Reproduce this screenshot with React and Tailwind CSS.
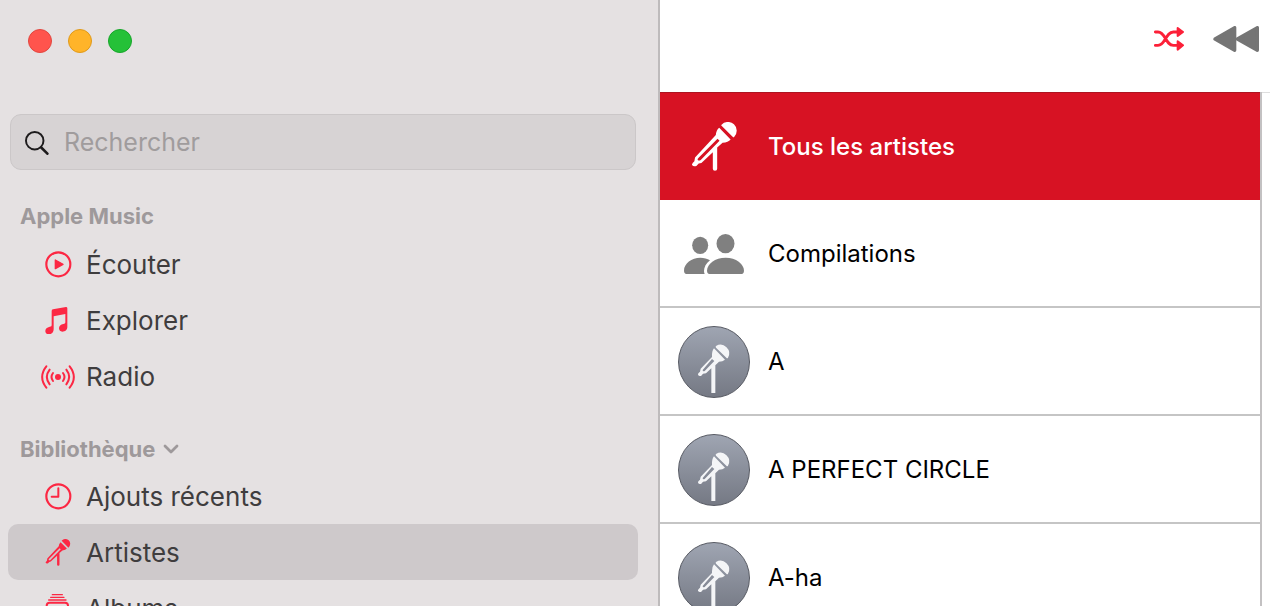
import React, { useState } from 'react';

function SearchIcon() {
  return (
    <svg viewBox="74 392 74 74" className="w-6 h-6 shrink-0" fill="none" stroke="#1d1b1c" strokeLinecap="round" aria-hidden="true">
      <circle cx="104" cy="422" r="27" strokeWidth="6" />
      <path d="M124 443 L143 462" strokeWidth="8" />
    </svg>
  );
}

function PlayIcon() {
  return (
    <svg viewBox="134 170 81 81" className="w-[27px] h-[27px]" aria-hidden="true">
      <circle cx="174" cy="210" r="36" fill="none" stroke="currentColor" strokeWidth="6.5" />
      <path d="M165 197 L188 210 L165 223 Z" fill="currentColor" stroke="currentColor" strokeWidth="4" strokeLinejoin="round" />
    </svg>
  );
}

function NoteIcon() {
  return (
    <svg viewBox="131 338 78 81" className="w-[26px] h-[27px]" fill="currentColor" aria-hidden="true">
      <path d="M151 350 Q151 346 155 345 L194 338 Q198 338 198 342 L198 398 C198 407 191 412 183 412 C177 412 173 408 173 402 C173 395 178 390 186 389 C191 388 192 387 192 383 L192 359 L157 366 L157 405 C157 414 151 420 142 420 C136 420 132 416 132 410 C132 403 137 399 145 397 C150 396 151 395 151 391 Z" />
    </svg>
  );
}

function RadioIcon() {
  return (
    <svg viewBox="122 508 102 72" className="w-[34px] h-6" fill="none" stroke="currentColor" strokeWidth="6" strokeLinecap="round" aria-hidden="true">
      <circle cx="173" cy="544" r="9" fill="currentColor" stroke="none" />
      <path d="M158 532 Q149 544 158 556 M188 532 Q197 544 188 556" />
      <path d="M148 522 Q131 544 148 566 M198 522 Q215 544 198 566" />
      <path d="M138 512 Q113 544 138 576 M208 512 Q233 544 208 576" />
    </svg>
  );
}

function ClockIcon() {
  return (
    <svg viewBox="134 176 81 81" className="w-[27px] h-[27px]" fill="none" stroke="currentColor" strokeLinecap="round" strokeLinejoin="round" aria-hidden="true">
      <circle cx="174" cy="216" r="36" strokeWidth="6.5" />
      <path d="M174 192 V217 H154" strokeWidth="6" />
    </svg>
  );
}

function MicIcon({ className }) {
  return (
    <svg viewBox="36 50 134 146" className={className} fill="currentColor" aria-hidden="true">
      <path d="M124 58 A26 26 0 0 1 162 94 Q160 97 157 94 L124 61 Q122 60 124 58 Z" />
      <path
        fillRule="evenodd"
        d="M117 67 L151 102 Q144 111 127 112 L111 126 L111 189 Q111 195 104.500 195 Q98 195 98 189 L98 140 L64 172 L56 174 L49 181 Q40 184 36 178 Q35 174 43 167 L45 156 L107 89 Q108 74 117 67 Z M112 100 L118 106 L62 163 Q56 166 53 163 Q52 160 55 157 Z"
      />
    </svg>
  );
}

function AlbumIcon() {
  return (
    <svg viewBox="134 508 78 90" className="w-[26px] h-[30px]" fill="none" stroke="currentColor" strokeLinecap="round" aria-hidden="true">
      <path d="M156 510 H186 M151 518 H191 M145 526 H197" strokeWidth="4" />
      <rect x="139" y="534" width="64" height="54" rx="9" strokeWidth="6" />
    </svg>
  );
}

function ChevronIcon() {
  return (
    <svg viewBox="0 0 16 12" className="w-4 h-3" fill="none" stroke="currentColor" strokeWidth="2.8" strokeLinecap="round" strokeLinejoin="round" aria-hidden="true">
      <path d="M2 3 L8 9 L14 3" />
    </svg>
  );
}

function ShuffleIcon() {
  return (
    <svg viewBox="102 79 93 75" className="w-[31px] h-[25px]" aria-hidden="true">
      <path
        d="M106 97 H114 C137 97 136 137 160 137 H174 M106 137 H114 C137 137 136 97 160 97 H174"
        fill="none"
        stroke="currentColor"
        strokeWidth="8.5"
        strokeLinecap="round"
      />
      <path
        d="M173 85 L189 97 L173 109 Z M173 125 L189 137 L173 150 Z"
        fill="currentColor"
        stroke="currentColor"
        strokeWidth="6"
        strokeLinejoin="round"
      />
    </svg>
  );
}

function RewindIcon() {
  return (
    <svg viewBox="278 78 138 81" className="w-[46px] h-[27px]" fill="currentColor" stroke="currentColor" strokeWidth="10" strokeLinejoin="round" aria-hidden="true">
      <path d="M284 117 L343 83 V151 Z" />
      <path d="M351 117 L411 83 V151 Z" />
    </svg>
  );
}

function PeopleIcon() {
  return (
    <svg viewBox="252 462 180 120" className="w-[60px] h-10" fill="#808080" aria-hidden="true">
      <ellipse cx="300.500" cy="496" rx="24" ry="26" />
      <ellipse cx="376.500" cy="491" rx="27" ry="29" />
      <path d="M262 582 Q252 582 252 572 C252 550 275 533 301 533 C312 533 322 536 330 541 C318 550 312 562 312 573 Q312 578 314 582 Z" />
      <path d="M331 582 Q321 582 321 572 C321 552 345 533 377 533 C408 533 432 552 432 572 Q432 582 422 582 Z" />
    </svg>
  );
}

function ArtistAvatar() {
  return (
    <span className="flex w-[72px] h-[72px] rounded-full border border-[#565962] bg-linear-to-b from-[#9fa5b2] to-[#757984] overflow-hidden">
      <svg viewBox="27 51 210 210" className="w-full h-full" fill="#f4f5f7" aria-hidden="true">
        <path d="M138 108 A26 26 0 0 1 174 143 Q172 146 169 143 L138 113 Q136 110 138 108 Z" />
        <path
          fillRule="evenodd"
          d="M132 115 L165 149 Q158 155 147 155 L136 166 L136 249 H124 V175 L108 190 L99 191 L94 197 Q87 200 84 194 Q83 190 90 185 L92 176 L126 141 Q125 123 132 115 Z M126 147 L133 153 L104 183 Q98 185 98 180 Z"
        />
      </svg>
    </span>
  );
}

const appleMusic = [
  { id: 'ecouter', label: 'Écouter', icon: <PlayIcon /> },
  { id: 'explorer', label: 'Explorer', icon: <NoteIcon /> },
  { id: 'radio', label: 'Radio', icon: <RadioIcon /> },
];

const library = [
  { id: 'recents', label: 'Ajouts récents', icon: <ClockIcon /> },
  { id: 'artistes', label: 'Artistes', icon: <MicIcon className="w-[26px] h-[27px]" /> },
  { id: 'albums', label: 'Albums', icon: <AlbumIcon /> },
];

const artists = [
  { id: 'all', name: 'Tous les artistes', icon: <MicIcon className="w-[45px] h-[49px]" /> },
  { id: 'compilations', name: 'Compilations', icon: <PeopleIcon /> },
  { id: 'a', name: 'A' },
  { id: 'apc', name: 'A PERFECT CIRCLE' },
  { id: 'aha', name: 'A-ha' },
];

function NavItem({ item, active, onSelect }) {
  return (
    <li>
      <button
        type="button"
        onClick={() => onSelect(item.id)}
        className={`flex items-center w-full h-14 pt-px pl-[33px] gap-[11px] rounded-[10px] text-left text-[26px] text-[#3f3d3e] ${
          active ? 'bg-[#cec9cb]' : ''
        }`}
      >
        <span className="flex justify-center w-[34px] text-[#fc2743]">{item.icon}</span>
        {item.label}
      </button>
    </li>
  );
}

function ArtistRow({ artist, active, onSelect }) {
  return (
    <li>
      <button
        type="button"
        onClick={() => onSelect(artist.id)}
        className={`flex items-center w-full h-[108px] pl-[18px] gap-[18px] text-left text-2xl ${
          active
            ? 'bg-[#d71223] text-white font-medium border-t border-[#ad1420]'
            : 'pt-[2px] text-black border-b-2 border-[#c5c5c5]'
        }`}
      >
        <span className="flex justify-center w-[72px]">{artist.icon || <ArtistAvatar />}</span>
        {artist.name}
      </button>
    </li>
  );
}

export default function App() {
  const [page, setPage] = useState('artistes');
  const [selected, setSelected] = useState('all');
  const [open, setOpen] = useState(true);

  return (
    <div className="grid grid-cols-[66fr_61fr] h-screen overflow-hidden bg-white font-['Inter','Liberation_Sans',sans-serif]">
      <aside className="bg-[#e5e1e2] border-r-2 border-[#bebbbc] overflow-hidden">
        <div className="flex gap-4 pl-7 pt-[29px]">
          <button type="button" aria-label="Fermer" className="w-6 h-6 rounded-full bg-[#ff544d] border border-[#e2463f]" />
          <button type="button" aria-label="Réduire" className="w-6 h-6 rounded-full bg-[#ffb429] border border-[#e09a1a]" />
          <button type="button" aria-label="Agrandir" className="w-6 h-6 rounded-full bg-[#25c138] border border-[#17a62a]" />
        </div>

        <label className="flex items-center gap-[15px] h-14 mt-[61px] ml-[10px] mr-[22px] pt-[2px] pl-[14px] rounded-[11px] border border-[#cbc7c8] bg-[#d7d3d4]">
          <SearchIcon />
          <input
            type="search"
            aria-label="Rechercher"
            placeholder="Rechercher"
            className="flex-1 min-w-0 bg-transparent outline-none text-[25px] text-[#3f3d3e] placeholder:text-[#a09c9d]"
          />
        </label>

        <nav className="flex flex-col gap-6 mt-[26px] pl-2 pr-5">
          <section>
            <h2 className="flex items-center h-10 pl-3 text-[22px] font-bold text-[#9e999b]">Apple Music</h2>
            <ul>
              {appleMusic.map((item) => (
                <NavItem key={item.id} item={item} active={page === item.id} onSelect={setPage} />
              ))}
            </ul>
          </section>

          <section>
            <h2 className="text-[22px] font-bold text-[#9e999b]">
              <button type="button" onClick={() => setOpen(!open)} className="flex items-center gap-2 h-10 pt-[2px] pl-3">
                Bibliothèque
                <ChevronIcon />
              </button>
            </h2>
            {open && (
              <ul>
                {library.map((item) => (
                  <NavItem key={item.id} item={item} active={page === item.id} onSelect={setPage} />
                ))}
              </ul>
            )}
          </section>
        </nav>
      </aside>

      <main className="flex flex-col min-w-0 min-h-0">
        <header className="flex items-start justify-end gap-7 h-[92px] shrink-0 pt-[26px] pr-[11px]">
          <button type="button" aria-label="Lecture aléatoire" className="text-[#fc2038]">
            <ShuffleIcon />
          </button>
          <button type="button" aria-label="Précédent" className="text-[#757575]">
            <RewindIcon />
          </button>
        </header>

        <div className="flex flex-1 min-h-0">
          <ul className="flex-1 min-w-0 border-r-2 border-[#c3c1c2] overflow-hidden">
            {artists.map((artist) => (
              <ArtistRow
                key={artist.id}
                artist={artist}
                active={selected === artist.id}
                onSelect={setSelected}
              />
            ))}
          </ul>
          <div className="w-2 border-t border-[#dedede]" />
        </div>
      </main>
    </div>
  );
}
